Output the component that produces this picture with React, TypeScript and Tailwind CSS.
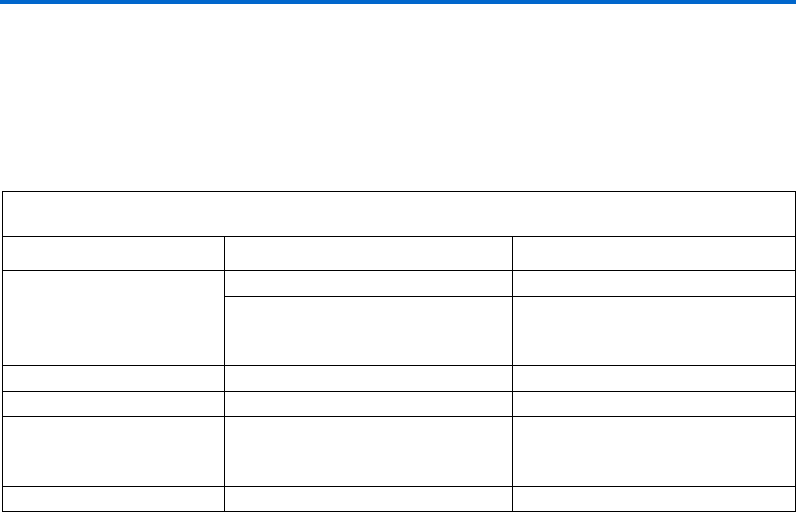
import React from 'react';

const Cell: React.FC<{ className?: string }> = ({ className = '' }) => (
  <div className={`bg-white ${className}`}></div>
);

const App: React.FC = () => {
  return (
    <div className="w-[796px] h-[512px] bg-white overflow-hidden font-['Liberation_Sans',sans-serif]">
      <div className="h-1 bg-[#0066cc]"></div>
      <div className="mt-[187px] ml-[2px] w-[794px] grid grid-cols-[221px_287px_282px] grid-rows-[44px_33px_25px_68px_25px_24px_69px_24px] gap-px p-px bg-black">
        <Cell className="col-span-3" />

        <Cell />
        <Cell />
        <Cell />

        <Cell className="row-span-2" />
        <Cell />
        <Cell />
        <Cell />
        <Cell />

        <Cell />
        <Cell />
        <Cell />

        <Cell />
        <Cell />
        <Cell />

        <Cell />
        <Cell />
        <Cell />

        <Cell />
        <Cell />
        <Cell />
      </div>
    </div>
  );
};

export default App;
